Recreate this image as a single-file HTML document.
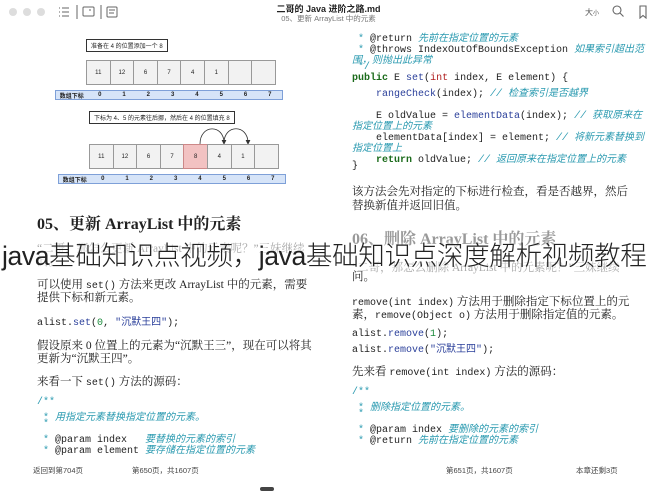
<!DOCTYPE html>
<html><head><meta charset="utf-8"><style>
*{margin:0;padding:0;box-sizing:border-box}
body{width:657px;height:490px;background:#fff;position:relative;overflow:hidden;font-family:"Liberation Serif","Noto Serif CJK SC",serif;color:#222}
.a{position:absolute;white-space:pre}
.m{font-family:"Liberation Mono","Noto Sans CJK SC",monospace;font-size:10px}
.s{font-family:"Liberation Sans","Noto Sans CJK SC",sans-serif}
.t{font-size:11.5px}
.c{color:#2a9ab0;font-style:italic}
.k{color:#1b6b1b;font-weight:bold}
.f{color:#2a3f9a}
.g{color:#1a8a3a}
.r{color:#b02020}
.cells{position:absolute;display:flex}
.cells div{width:24.6px;height:25px;border:1px solid #999;background:#f2f2f2;font:6px "Liberation Sans",sans-serif;display:flex;align-items:center;justify-content:center;margin-right:-1px}
.idx{position:absolute;height:10px;background:#d6e4f8;border:1px solid #7ea0d8;font:bold 6px "Liberation Sans","Noto Sans CJK SC",sans-serif;display:flex;align-items:center}
.idx span{width:24.6px;text-align:center}
.lbl{position:absolute;border:1px solid #333;font:6px "Liberation Sans","Noto Sans CJK SC",sans-serif;padding:1px 4px;background:#fff;white-space:nowrap}
</style></head><body>
<div class="a" style="left:9px;top:8px;width:8px;height:8px;border-radius:50%;background:#ddd"></div>
<div class="a" style="left:23px;top:8px;width:8px;height:8px;border-radius:50%;background:#ddd"></div>
<div class="a" style="left:37px;top:8px;width:8px;height:8px;border-radius:50%;background:#ddd"></div>
<svg class="a" style="left:58px;top:5px" width="62" height="14" viewBox="0 0 62 14" fill="none" stroke="#666" stroke-width="1">
<path d="M1 3h1M4 3h7M1 7h1M4 7h7M1 11h1M4 11h7"/><path d="M19 0v14"/><rect x="25" y="2" width="11" height="9" rx="1"/><path d="M32 4v2"/><path d="M43 0v14"/><rect x="49" y="2" width="10" height="10" rx="1"/><path d="M51 5h6M51 8h5"/></svg>
<div class="a s" style="left:0;width:657px;text-align:center;top:2px;font-size:9px;font-weight:bold;color:#222">二哥的 Java 进阶之路.md</div>
<div class="a s" style="left:0;width:657px;text-align:center;top:13px;font-size:7.5px;color:#777">05、更新 ArrayList 中的元素</div>
<div class="a s" style="left:585px;top:7px;font-size:8px;color:#555">大<span style="font-size:6px">小</span></div>
<svg class="a" style="left:612px;top:5px" width="36" height="14" viewBox="0 0 36 14" fill="none" stroke="#666" stroke-width="1.1"><circle cx="5" cy="5" r="4"/><path d="M8 8l3.5 3.5"/><path d="M28 1h6v12l-3-2.5-3 2.5z"/></svg>

<div class="lbl" style="left:86px;top:39px">准备在 4 的位置添加一个 8</div>
<div class="cells" style="left:86px;top:60px"><div>11</div><div>12</div><div>6</div><div>7</div><div>4</div><div>1</div><div></div><div></div></div>
<div class="idx" style="left:55px;top:90px;width:228px"><span style="width:32px">数组下标</span><span>0</span><span>1</span><span>2</span><span>3</span><span>4</span><span>5</span><span>6</span><span>7</span></div>
<div class="lbl" style="left:89px;top:111px">下标为 4、5 的元素往后挪，然后在 4 的位置填充 8</div>
<svg class="a" style="left:195px;top:124px" width="60" height="22" fill="none" stroke="#333" stroke-width="0.8"><path d="M5 20 C5 0 29 0 29 19"/><path d="M29 19 C29 0 53 0 53 19"/><path d="M27 16l2 4 2-4M51 16l2 4 2-4" fill="#333"/></svg>
<div class="cells" style="left:89px;top:144px"><div>11</div><div>12</div><div>6</div><div>7</div><div style="background:#f2c2c2;border-color:#c88">8</div><div>4</div><div>1</div><div></div></div>
<div class="idx" style="left:58px;top:174px;width:228px"><span style="width:32px">数组下标</span><span>0</span><span>1</span><span>2</span><span>3</span><span>4</span><span>5</span><span>6</span><span>7</span></div>

<div class="a" style="left:37px;top:211px;font-size:16px;font-weight:bold">05、更新 ArrayList 中的元素</div>
<div class="a" style="left:37px;top:240px;font-size:11.5px;color:#aaa">“二哥，那怎么更新 ArrayList 中的元素呢？”三妹继续</div>
<div class="a" style="left:37px;top:253px;font-size:11.5px;color:#aaa">问。</div>
<div class="a t" style="left:37px;top:276px">可以使用 <span class="m">set()</span> 方法来更改 ArrayList 中的元素，需要</div>
<div class="a t" style="left:37px;top:289px">提供下标和新元素。</div>
<div class="a m" style="left:37px;top:313px">alist.<span class="f">set</span>(<span class="g">0</span>, <span class="f">"沉默王四"</span>);</div>
<div class="a t" style="left:37px;top:337px">假设原来 0 位置上的元素为“沉默王三”，现在可以将其</div>
<div class="a t" style="left:37px;top:350px">更新为“沉默王四”。</div>
<div class="a t" style="left:37px;top:373px">来看一下 <span class="m">set()</span> 方法的源码：</div>
<div class="a m" style="left:37px;top:397px;color:#2a9ab0">/**</div>
<div class="a m" style="left:37px;top:408px"><span style="color:#2a9ab0"> * </span><span class="c">用指定元素替换指定位置的元素。</span></div>
<div class="a m" style="left:37px;top:419px;color:#2a9ab0"> *</div>
<div class="a m" style="left:37px;top:430px"><span style="color:#2a9ab0"> * </span>@param index   <span class="c">要替换的元素的索引</span></div>
<div class="a m" style="left:37px;top:441px"><span style="color:#2a9ab0"> * </span>@param element <span class="c">要存储在指定位置的元素</span></div>
<div class="a s" style="left:33px;top:465px;font-size:7.5px;color:#444">返回到第704页</div>
<div class="a s" style="left:132px;top:465px;font-size:7.5px;color:#444">第650页，共1607页</div>

<div class="a m" style="left:352px;top:29px"><span style="color:#2a9ab0"> * </span>@return <span class="c">先前在指定位置的元素</span></div>
<div class="a m" style="left:352px;top:40px"><span style="color:#2a9ab0"> * </span>@throws IndexOutOfBoundsException <span class="c">如果索引超出范</span></div>
<div class="a m" style="left:352px;top:51px"><span class="c">围，则抛出此异常</span></div>
<div class="a m" style="left:352px;top:62px;color:#2a9ab0"> */</div>
<div class="a m" style="left:352px;top:73px"><span class="k">public</span> E <span class="f">set</span>(<span class="r">int</span> index, E element) {</div>
<div class="a m" style="left:352px;top:84px">    <span class="f">rangeCheck</span>(index); <span class="c">// 检查索引是否越界</span></div>
<div class="a m" style="left:352px;top:106px">    E oldValue = <span class="f">elementData</span>(index); <span class="c">// 获取原来在</span></div>
<div class="a m" style="left:352px;top:117px"><span class="c">指定位置上的元素</span></div>
<div class="a m" style="left:352px;top:128px">    elementData[index] = element; <span class="c">// 将新元素替换到</span></div>
<div class="a m" style="left:352px;top:139px"><span class="c">指定位置上</span></div>
<div class="a m" style="left:352px;top:150px">    <span class="k">return</span> oldValue; <span class="c">// 返回原来在指定位置上的元素</span></div>
<div class="a m" style="left:352px;top:161px">}</div>
<div class="a t" style="left:352px;top:183px">该方法会先对指定的下标进行检查，看是否越界，然后</div>
<div class="a t" style="left:352px;top:197px">替换新值并返回旧值。</div>
<div class="a" style="left:352px;top:226px;font-size:16px;font-weight:bold;color:#999">06、删除 ArrayList 中的元素</div>
<div class="a" style="left:352px;top:259px;font-size:11.5px;color:#aaa">“二哥，那怎么删除 ArrayList 中的元素呢？”三妹继续</div>
<div class="a t" style="left:352px;top:268px">问。</div>
<div class="a t" style="left:352px;top:293px"><span class="m">remove(int index)</span> 方法用于删除指定下标位置上的元</div>
<div class="a t" style="left:352px;top:306px">素，<span class="m">remove(Object o)</span> 方法用于删除指定值的元素。</div>
<div class="a m" style="left:352px;top:329px">alist.<span class="f">remove</span>(<span class="g">1</span>);</div>
<div class="a m" style="left:352px;top:340px">alist.<span class="f">remove</span>(<span class="f">"沉默王四"</span>);</div>
<div class="a t" style="left:352px;top:363px">先来看 <span class="m">remove(int index)</span> 方法的源码：</div>
<div class="a m" style="left:352px;top:387px;color:#2a9ab0">/**</div>
<div class="a m" style="left:352px;top:398px"><span style="color:#2a9ab0"> * </span><span class="c">删除指定位置的元素。</span></div>
<div class="a m" style="left:352px;top:409px;color:#2a9ab0"> *</div>
<div class="a m" style="left:352px;top:420px"><span style="color:#2a9ab0"> * </span>@param index <span class="c">要删除的元素的索引</span></div>
<div class="a m" style="left:352px;top:431px"><span style="color:#2a9ab0"> * </span>@return <span class="c">先前在指定位置的元素</span></div>
<div class="a s" style="left:446px;top:465px;font-size:7.5px;color:#444">第651页，共1607页</div>
<div class="a s" style="left:576px;top:465px;font-size:7.5px;color:#444">本章还剩3页</div>
<div class="a" style="left:260px;top:487px;width:14px;height:4px;border-radius:2px;background:#444"></div>

<div class="a s" style="left:2px;top:234px;font-size:26.6px;color:#222;text-shadow:0 0 3px #fff,0 0 3px #fff;letter-spacing:-0.4px;font-weight:300">java基础知识点视频，java基础知识点深度解析视频教程</div>
</body></html>
